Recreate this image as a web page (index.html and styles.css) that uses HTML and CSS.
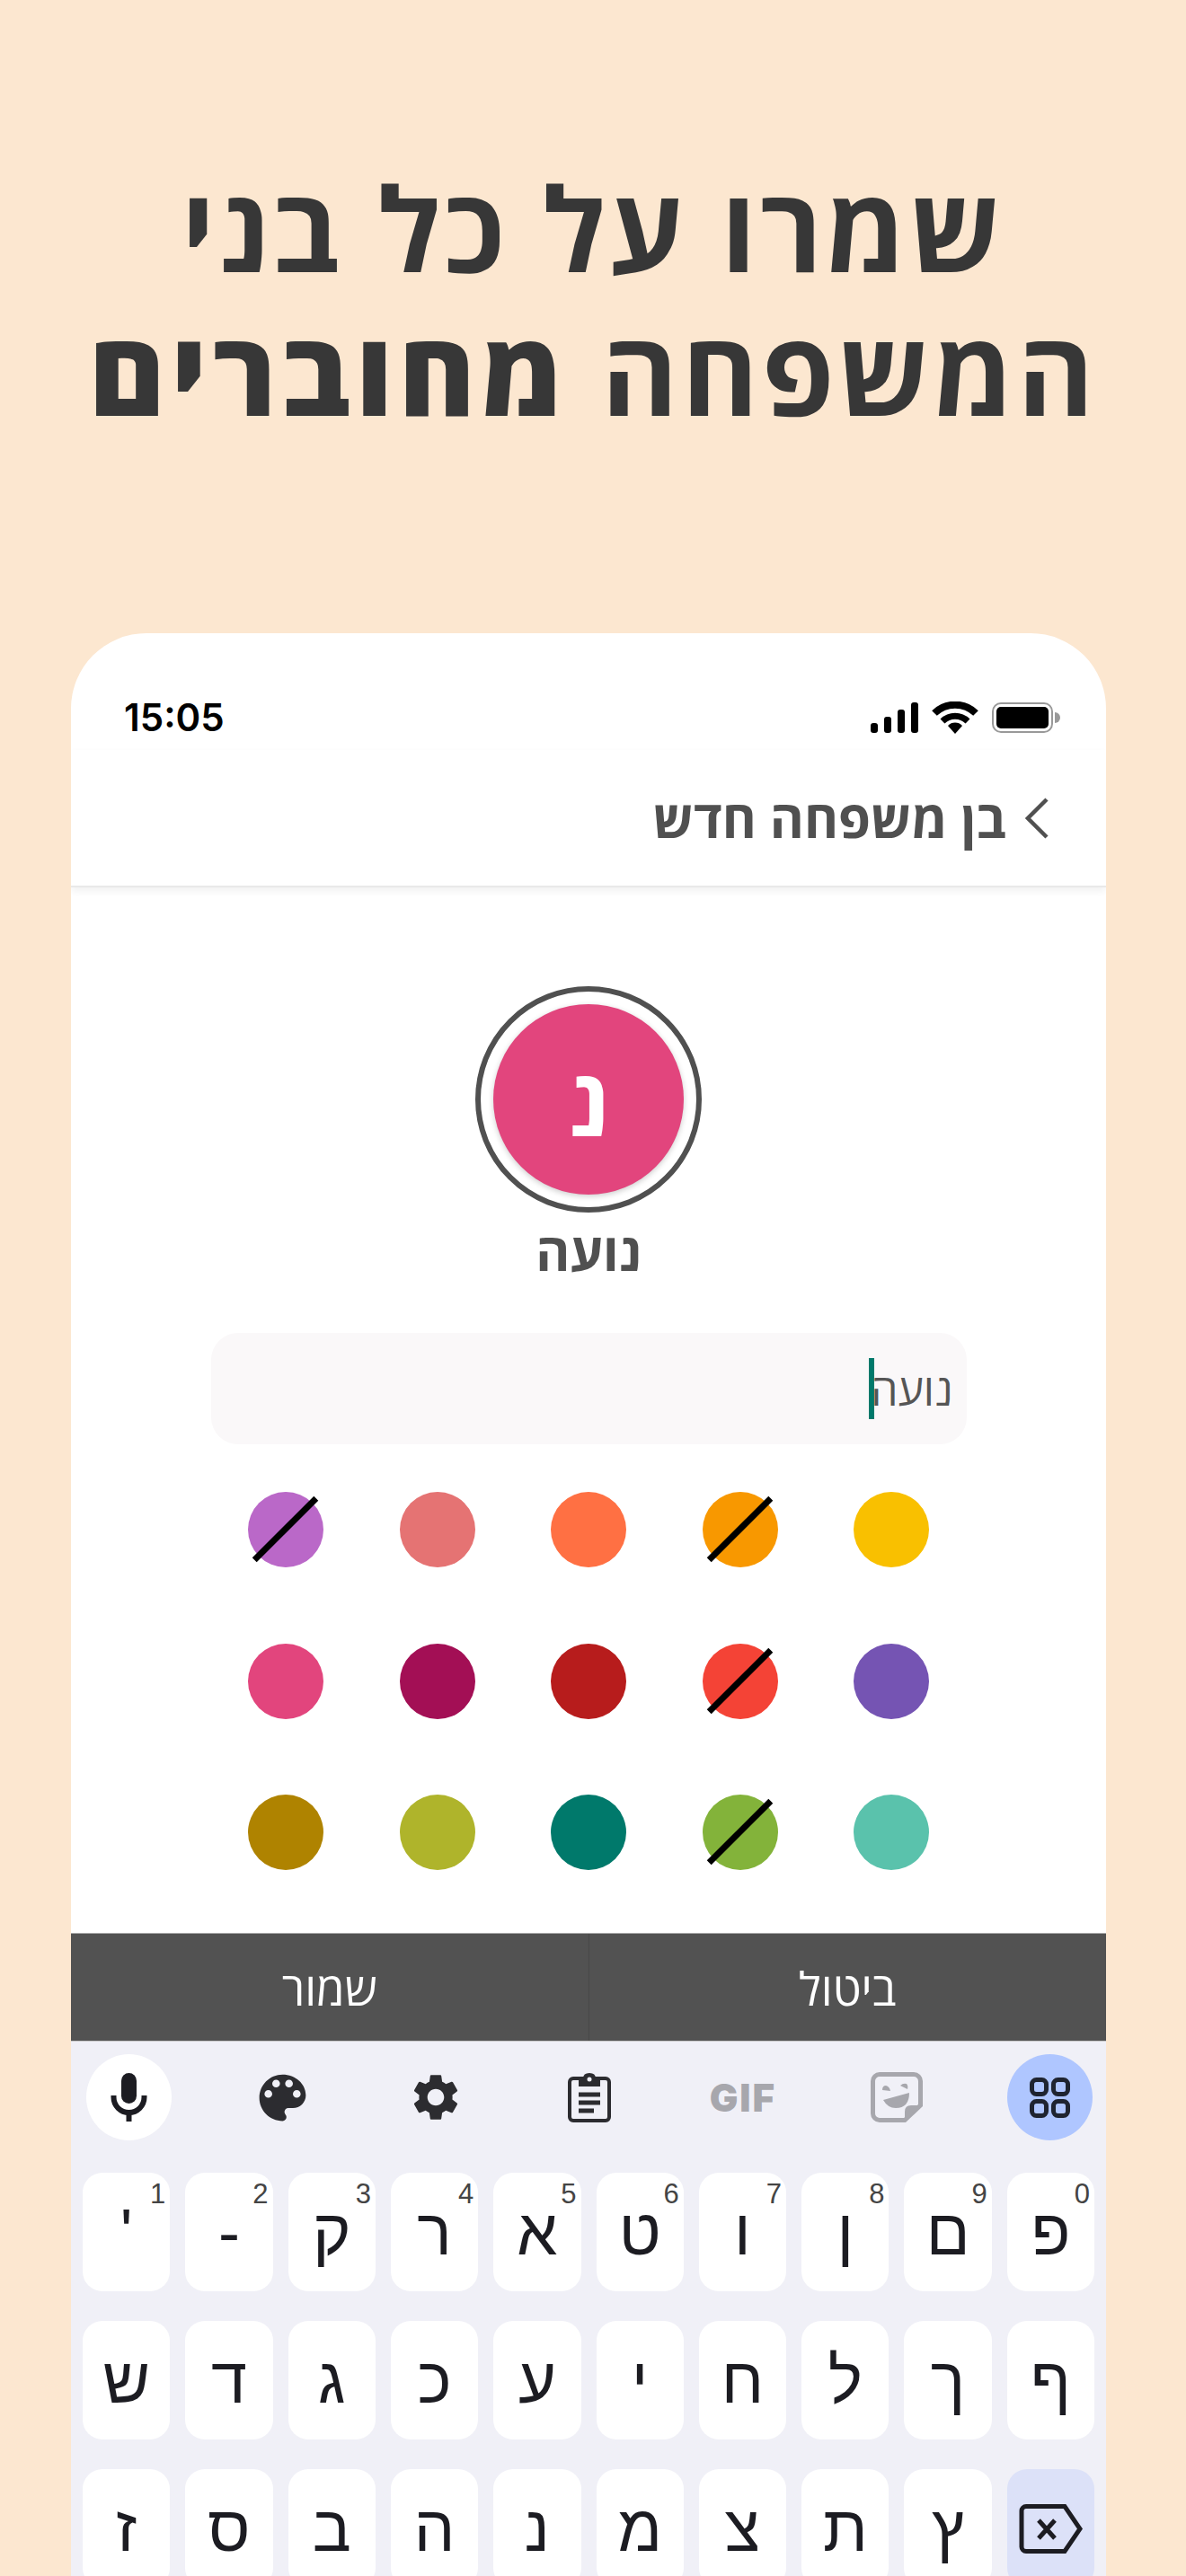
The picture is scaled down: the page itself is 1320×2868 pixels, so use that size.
FILE: index.html
```html
<!DOCTYPE html>
<html lang="he" dir="rtl">
<head>
    <meta charset="UTF-8">
    <meta name="viewport" content="width=device-width, initial-scale=1.0">
    <title>בן משפחה חדש</title>
    <link rel="stylesheet" href="styles.css">
</head>
<body>
    <h1 class="headline">שמרו על כל בני<br>המשפחה <strong>מחוברים</strong></h1>

    <div class="phone">
        <!-- Status bar -->
        <div class="status" dir="ltr">
            <span class="time">15:05</span>
            <div class="status-icons">
                <svg class="signal" viewBox="0 0 53 34"><rect x="0" y="23" width="8" height="11" rx="3"/><rect x="15" y="16" width="8" height="18" rx="3"/><rect x="30" y="8" width="8" height="26" rx="3"/><rect x="45" y="0" width="8" height="34" rx="3"/></svg>
                <svg class="wifi" viewBox="0 0 52 36"><path d="M3 13A33 33 0 0 1 49 13" fill="none" stroke="#000" stroke-width="8"/><path d="M12 22A20 20 0 0 1 40 22" fill="none" stroke="#000" stroke-width="7"/><path d="M26 36L18 27A11 11 0 0 1 34 27Z"/></svg>
                <svg class="battery" viewBox="0 0 76 34"><rect x="1" y="1" width="66" height="32" rx="9" fill="none" stroke="#999" stroke-width="2"/><rect x="5" y="5" width="58" height="24" rx="5"/><path d="M70 11a6 6 0 0 1 0 12Z" fill="#999"/></svg>
            </div>
        </div>

        <!-- Title bar -->
        <div class="nav">
            <svg class="back" viewBox="0 0 26 46"><path d="M24 2L3 23L24 44" fill="none" stroke="#505050" stroke-width="4.500"/></svg>
            <span class="nav-title">בן משפחה חדש</span>
        </div>

        <!-- Form -->
        <div class="form">
            <div class="avatar-ring">
                <div class="avatar">נ</div>
            </div>
            <div class="name">נועה</div>
            <div class="field"><span class="field-text">נועה</span><span class="caret"></span></div>
            <div class="colors">
                <span class="dot c-yellow"></span>
                <span class="dot taken c-orange"></span>
                <span class="dot c-coral"></span>
                <span class="dot c-salmon"></span>
                <span class="dot taken c-violet"></span>
                <span class="dot c-purple"></span>
                <span class="dot taken c-red"></span>
                <span class="dot c-darkred"></span>
                <span class="dot c-crimson"></span>
                <span class="dot c-pink"></span>
                <span class="dot c-mint"></span>
                <span class="dot taken c-green"></span>
                <span class="dot c-teal"></span>
                <span class="dot c-olive"></span>
                <span class="dot c-gold"></span>
            </div>
        </div>

        <!-- Cancel / save -->
        <div class="actions">
            <div class="action">ביטול</div>
            <div class="action">שמור</div>
        </div>

        <!-- Keyboard -->
        <div class="keyboard">
            <div class="toolbar">
                <div class="tool tool-apps">
                    <svg class="i-apps" viewBox="0 0 45 45" fill="none" stroke="#1f2430" stroke-width="5"><rect x="2.500" y="2.500" width="16" height="16" rx="5"/><rect x="26.500" y="2.500" width="16" height="16" rx="5"/><rect x="2.500" y="26.500" width="16" height="16" rx="5"/><rect x="26.500" y="26.500" width="16" height="16" rx="5"/></svg>
                </div>
                <div class="tool">
                    <svg class="i-sticker" viewBox="0 0 58 56"><path d="M10 2.500H48A7.500 7.500 0 0 1 55.500 10V37L38 53.500H10A7.500 7.500 0 0 1 2.500 46V10A7.500 7.500 0 0 1 10 2.500Z" fill="none" stroke="#a7a7ad" stroke-width="5"/><path d="M56 37L38 54V44Q38 37 45 37Z" fill="#a7a7ad"/><path d="M13 20Q13 15 17 15Q21 16 22 21Z M33 15Q36 12 40 13Q42 15 41 19Z M14 31L43 23Q43 40 28 40Q19 40 14 31Z" fill="#a7a7ad"/></svg>
                </div>
                <div class="tool"><span class="gif" dir="ltr">GIF</span></div>
                <div class="tool">
                    <svg class="i-clip" viewBox="0 0 48 56" fill="none" stroke="#2c2c30" stroke-width="4"><rect x="2" y="7" width="44" height="47" rx="4"/><path d="M13 7H18Q18 2 24 2Q30 2 30 7H35V15H13Z" fill="#2c2c30" stroke-width="2"/><circle cx="24" cy="8" r="2.500" fill="#f0f0f7" stroke="none"/><path d="M12 25H36M12 34H36M12 43H29" stroke-width="5"/></svg>
                </div>
                <div class="tool">
                    <svg class="i-gear" viewBox="0 0 24 24"><path fill="#2c2c30" fill-rule="evenodd" d="M19.140 12.940c.04-.3.06-.61.06-.94 0-.32-.02-.64-.07-.94l2.030-1.580c.18-.14.23-.41.12-.61l-1.920-3.320c-.12-.22-.37-.29-.59-.22l-2.390.96c-.5-.38-1.030-.7-1.620-.94l-.36-2.540c-.04-.24-.24-.41-.48-.41h-3.840c-.24 0-.43.17-.47.41l-.36 2.540c-.59.24-1.130.57-1.620.94l-2.390-.96c-.22-.08-.47 0-.59.22L2.740 8.870c-.12.21-.08.47.12.61l2.030 1.580c-.05.3-.09.63-.09.94s.02.64.07.94l-2.030 1.580c-.18.14-.23.41-.12.61l1.920 3.320c.12.22.37.29.59.22l2.390-.96c.5.38 1.030.7 1.620.94l.36 2.540c.05.24.24.41.48.41h3.840c.24 0 .44-.17.47-.41l.36-2.540c.59-.24 1.130-.56 1.620-.94l2.390.96c.22.08.47 0 .59-.22l1.920-3.320c.12-.22.07-.47-.12-.61l-2.010-1.580zM12 15.600c-1.980 0-3.600-1.620-3.600-3.600s1.620-3.600 3.600-3.600 3.600 1.620 3.600 3.600-1.620 3.600-3.600 3.600z"/></svg>
                </div>
                <div class="tool">
                    <svg class="i-palette" viewBox="0 0 24 24"><path fill="#2c2c30" d="M12 3c-4.970 0-9 4.030-9 9s4.030 9 9 9c.83 0 1.500-.67 1.500-1.500 0-.39-.15-.74-.39-1.010-.23-.26-.38-.61-.38-.99 0-.83.67-1.500 1.500-1.500H16c2.760 0 5-2.240 5-5 0-4.420-4.030-8-9-8zm-5.500 9c-.83 0-1.500-.67-1.500-1.500S5.670 9 6.500 9 8 9.670 8 10.500 7.330 12 6.500 12zm3-4C8.670 8 8 7.330 8 6.500S8.670 5 9.500 5s1.500.67 1.500 1.500S10.330 8 9.500 8zm5 0c-.83 0-1.500-.67-1.500-1.500S13.670 5 14.500 5s1.500.67 1.500 1.500S15.330 8 14.500 8zm3 4c-.83 0-1.500-.67-1.500-1.500S16.670 9 17.500 9s1.500.67 1.500 1.500-.67 1.500-1.500 1.500z"/></svg>
                </div>
                <div class="tool tool-mic">
                    <svg class="i-mic" viewBox="0 0 95 95" fill="none" stroke="#1c1c22"><rect x="39" y="20" width="17" height="34" rx="8.500" fill="#1c1c22" stroke="none"/><path d="M30.500 45V47A17 17 0 0 0 64.500 47V45" stroke-width="6"/><path d="M47.500 62V74" stroke-width="6"/></svg>
                </div>
            </div>

            <div class="keys">
                <div class="key">פ<sup class="hint">0</sup></div>
                <div class="key">ם<sup class="hint">9</sup></div>
                <div class="key">ן<sup class="hint">8</sup></div>
                <div class="key">ו<sup class="hint">7</sup></div>
                <div class="key">ט<sup class="hint">6</sup></div>
                <div class="key">א<sup class="hint">5</sup></div>
                <div class="key">ר<sup class="hint">4</sup></div>
                <div class="key">ק<sup class="hint">3</sup></div>
                <div class="key">-<sup class="hint">2</sup></div>
                <div class="key">'<sup class="hint">1</sup></div>

                <div class="key">ף</div>
                <div class="key">ך</div>
                <div class="key">ל</div>
                <div class="key">ח</div>
                <div class="key">י</div>
                <div class="key">ע</div>
                <div class="key">כ</div>
                <div class="key">ג</div>
                <div class="key">ד</div>
                <div class="key">ש</div>

                <div class="key key-del">
                    <svg class="i-del" viewBox="0 0 71 55" fill="none" stroke="#1c1c22" stroke-width="5"><path d="M8 2.500H51L68 27.500L51 52.500H8A5 5 0 0 1 3 47.500V7.500A5 5 0 0 1 8 2.500Z"/><path d="M22 18L40 38M40 18L22 38"/></svg>
                </div>
                <div class="key">ץ</div>
                <div class="key">ת</div>
                <div class="key">צ</div>
                <div class="key">מ</div>
                <div class="key">נ</div>
                <div class="key">ה</div>
                <div class="key">ב</div>
                <div class="key">ס</div>
                <div class="key">ז</div>
            </div>
        </div>
    </div>
</body>
</html>
```

FILE: styles.css
```css
html, body {
    margin: 0;
    height: 2868px;
    overflow: hidden;
}
body {
    background-color: #fce7d0;
    font-family: "Open Sans", "Liberation Sans", sans-serif;
}
.headline {
    margin: 0;
    padding-top: 173px;
    height: 705px;
    box-sizing: border-box;
    text-align: center;
    font-size: 130px;
    line-height: 160px;
    font-weight: 700;
    letter-spacing: 4px;
    color: #373737;
}
.headline strong {
    font-weight: 800;
    letter-spacing: 6px;
}
.phone {
    width: 1152px;
    margin-left: 79px;
    margin-right: auto;
    background-color: #fff;
    border-radius: 84px 84px 0 0;
    overflow: hidden;
}

/* status bar */
.status {
    height: 130px;
    box-sizing: border-box;
    padding: 57px 51px 0 59px;
    display: flex;
    justify-content: space-between;
    align-items: center;
}
.time {
    font-family: Inter, sans-serif;
    font-size: 42px;
    font-weight: 600;
    color: #000;
}
.status-icons {
    display: flex;
    align-items: center;
    gap: 15px;
}
.signal { width: 53px; height: 34px; }
.wifi { width: 52px; height: 36px; }
.battery { width: 76px; height: 34px; }

/* title bar */
.nav {
    height: 153px;
    box-sizing: border-box;
    padding-right: 64px;
    display: flex;
    align-items: center;
    gap: 21px;
    border-bottom: 2px solid #e9e9e9;
    box-shadow: 0 4px 8px rgba(0, 0, 0, 0.06);
    position: relative;
}
.back { width: 26px; height: 46px; }
.nav-title {
    font-size: 58px;
    font-weight: 700;
    color: #505050;
}

/* form */
.form {
    height: 1164px;
    padding-top: 110px;
    box-sizing: border-box;
    display: flex;
    flex-direction: column;
    align-items: center;
}
.avatar-ring {
    width: 252px;
    height: 252px;
    box-sizing: border-box;
    border: 6px solid #505050;
    border-radius: 50%;
    display: flex;
    align-items: center;
    justify-content: center;
}
.avatar {
    width: 212px;
    height: 212px;
    border-radius: 50%;
    background-color: #e2457d;
    box-shadow: 0 2px 6px rgba(0, 0, 0, 0.2);
    color: #fff;
    font-size: 104px;
    font-weight: 700;
    display: flex;
    align-items: center;
    justify-content: center;
}
.name {
    margin-top: 5px;
    font-size: 58px;
    line-height: 76px;
    font-weight: 700;
    color: #505050;
}
.field {
    margin-top: 53px;
    width: 841px;
    height: 124px;
    box-sizing: border-box;
    padding-right: 15px;
    border-radius: 30px;
    background-color: #faf8f9;
    display: flex;
    align-items: center;
}
.field-text {
    font-size: 48px;
    color: #555;
}
.caret {
    width: 6px;
    height: 68px;
    margin-right: -4px;
    background-color: #00796b;
}
.colors {
    margin-top: 53px;
    display: grid;
    grid-template-columns: repeat(5, 84px);
    gap: 84.5px;
}
.dot {
    width: 84px;
    height: 84px;
    border-radius: 50%;
    position: relative;
}
.taken::after {
    content: "";
    position: absolute;
    left: -7px;
    top: 38px;
    width: 97px;
    height: 7px;
    background-color: #000;
    transform: rotate(-45deg);
}
.c-yellow { background-color: #f9c000; }
.c-orange { background-color: #f89800; }
.c-coral { background-color: #ff7043; }
.c-salmon { background-color: #e57373; }
.c-violet { background-color: #ba68c8; }
.c-purple { background-color: #7554b3; }
.c-red { background-color: #f44336; }
.c-darkred { background-color: #b71c1c; }
.c-crimson { background-color: #a30f55; }
.c-pink { background-color: #e2457d; }
.c-mint { background-color: #5ac2ac; }
.c-green { background-color: #83b33a; }
.c-teal { background-color: #00796b; }
.c-olive { background-color: #afb42b; }
.c-gold { background-color: #af8300; }

/* cancel / save */
.actions {
    height: 121px;
    display: flex;
    background-color: #525252;
    border-top: 1px solid #a8a8a8;
    border-bottom: 1px solid #c8c8c8;
    box-sizing: border-box;
}
.action {
    flex: 1;
    display: flex;
    align-items: center;
    justify-content: center;
    font-size: 51px;
    color: #fff;
}
.action + .action {
    border-right: 1px solid #484848;
}

/* keyboard */
.keyboard {
    height: 595px;
    background-color: #f0f0f7;
}
.toolbar {
    padding: 14px 15px 0 17px;
    display: flex;
    justify-content: space-between;
    align-items: center;
}
.tool {
    width: 95px;
    height: 96px;
    border-radius: 50%;
    display: flex;
    align-items: center;
    justify-content: center;
}
.tool-apps { background-color: #afc6ff; }
.tool-mic { background-color: #fff; }
.i-apps { width: 45px; height: 45px; }
.i-sticker { width: 58px; height: 56px; }
.i-clip { width: 48px; height: 56px; }
.i-gear { width: 62px; height: 62px; }
.i-palette { width: 69px; height: 69px; }
.i-mic { width: 95px; height: 95px; }
.gif {
    font-family: Inter, sans-serif;
    font-size: 42px;
    font-weight: 900;
    letter-spacing: 2px;
    color: #a7a7ad;
}
.keys {
    margin-top: 36px;
    padding: 0 13px;
    display: grid;
    grid-template-columns: repeat(10, 1fr);
    grid-auto-rows: 132px;
    column-gap: 17px;
    row-gap: 33px;
}
.key {
    position: relative;
    background-color: #fff;
    border-radius: 22px;
    display: flex;
    align-items: center;
    justify-content: center;
    font-family: "Liberation Sans", sans-serif;
    font-size: 72px;
    color: #1c1c22;
}
.hint {
    position: absolute;
    top: 6px;
    right: 5px;
    font-size: 31px;
    line-height: 36px;
    color: #444;
    vertical-align: baseline;
}
.key-del {
    background-color: #dce1f8;
}
.i-del { width: 71px; height: 55px; }
```
